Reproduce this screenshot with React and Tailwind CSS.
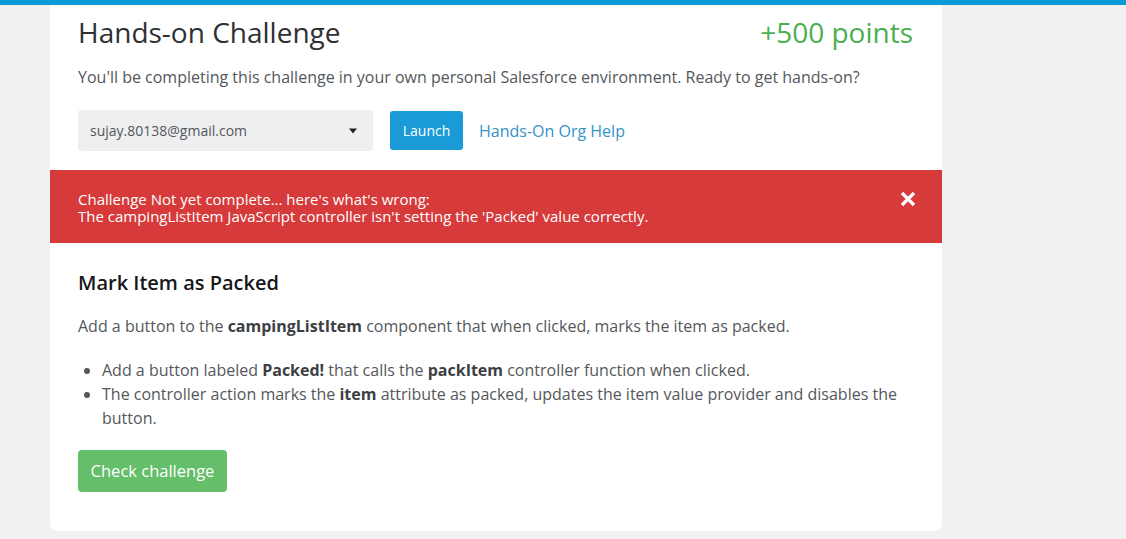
import React from "react";

export default function App() {
  return (
    <div className="min-h-[539px] w-[1126px] bg-[#f1f1f3] font-['Open_Sans',sans-serif]">
      <div className="h-[5px] bg-[#0a9ad8]" />
      <div className="ml-[50px] w-[892px] rounded-b-[8px] bg-white px-[28px] pb-[39px]">
        <div className="flex items-center justify-between pt-[9px]">
          <h1 className="text-[28px] leading-[36px] text-[#2e3033]">Hands-on Challenge</h1>
          <div className="mr-[1px] text-[28px] leading-[36px] text-[#4bae4f]">+500 points</div>
        </div>
        <p className="mt-[17px] text-[16px] leading-[20px] text-[#54575b]">
          You'll be completing this challenge in your own personal Salesforce environment. Ready to get hands-on?
        </p>
        <div className="mt-[23px] flex items-center">
          <div className="flex h-[41px] w-[295px] items-center justify-between rounded-[3px] bg-[#eeeff0] pl-[12px] pr-[12px] text-[14px] text-[#54575b]">
            <span>sujay.80138@gmail.com</span>
            <svg width="10" height="6" viewBox="0 0 10 6" className="mr-[3px]">
              <path d="M1 0.5h8L5 5.5z" fill="#222" />
            </svg>
          </div>
          <button className="ml-[17px] h-[39px] w-[73px] rounded-[3px] bg-[#1a9bd7] text-[14px] text-white">Launch</button>
          <a className="ml-[16px] text-[16px] text-[#3593c6]">Hands-On Org Help</a>
        </div>
        <div className="-mx-[28px] mt-[19px] flex h-[73px] items-center justify-between bg-[#d63a3a] pl-[28px] pr-[26px] text-white">
          <div className="pt-[3px] text-[15px] leading-[17px]">
            <div>Challenge Not yet complete... here's what's wrong:</div>
            <div>The campingListItem JavaScript controller isn't setting the 'Packed' value correctly.</div>
          </div>
          <svg width="16" height="16" viewBox="0 0 16 16" className="mb-[16px]">
            <path d="M2 2L14 14M14 2L2 14" stroke="white" strokeWidth="3.2" />
          </svg>
        </div>
        <h2 className="mt-[28px] text-[20px] font-semibold leading-[24px] text-[#16171a]">Mark Item as Packed</h2>
        <p className="mt-[19px] text-[16px] leading-[24px] text-[#54575b]">
          Add a button to the <b className="font-bold text-[#3c3f44]">campingListItem</b> component that when clicked, marks the item as packed.
        </p>
        <ul className="mt-[20px] list-disc pl-[24px] text-[16px] leading-[24px] text-[#54575b]">
          <li>
            Add a button labeled <b className="font-bold text-[#3c3f44]">Packed!</b> that calls the{" "}
            <b className="font-bold text-[#3c3f44]">packItem</b> controller function when clicked.
          </li>
          <li>
            The controller action marks the <b className="font-bold text-[#3c3f44]">item</b> attribute as packed, updates the item value provider and disables the button.
          </li>
        </ul>
        <button className="mt-[20px] h-[42px] w-[149px] rounded-[4px] bg-[#65be6a] text-[16.5px] text-white">Check challenge</button>
      </div>
    </div>
  );
}
